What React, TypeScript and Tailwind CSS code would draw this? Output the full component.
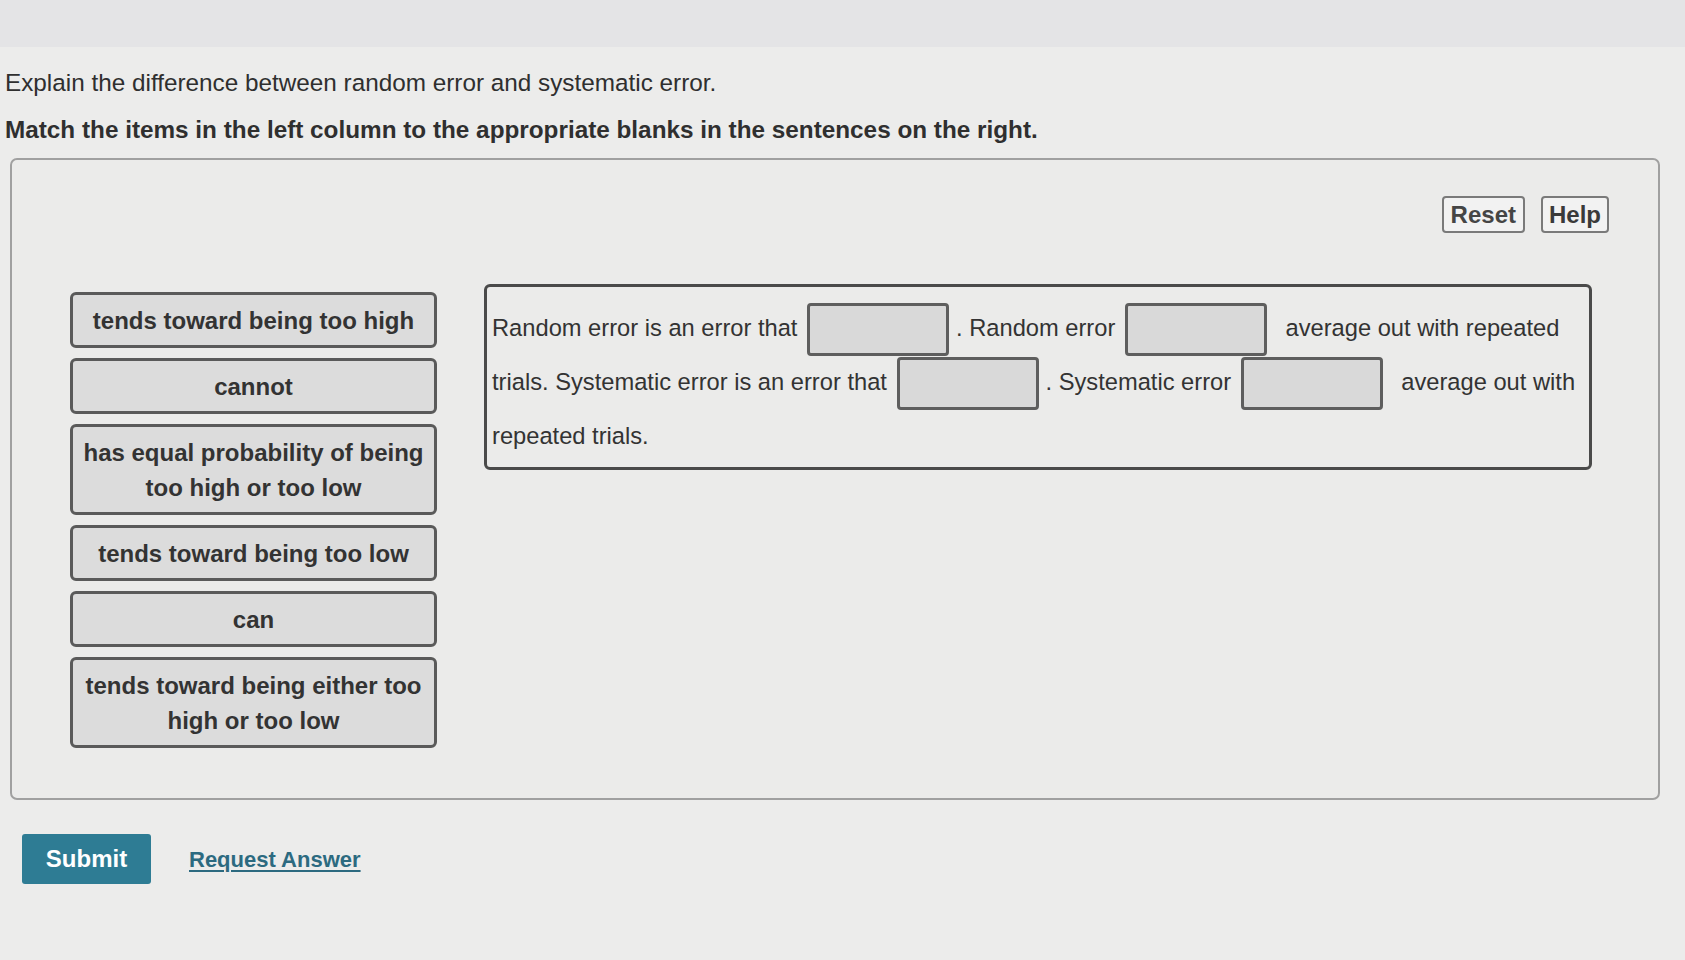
import React from 'react';

const choices: { label: React.ReactNode; tall?: boolean }[] = [
    { label: 'tends toward being too high' },
    { label: 'cannot' },
    { label: <>has equal probability of being<br />too high or too low</>, tall: true },
    { label: 'tends toward being too low' },
    { label: 'can' },
    { label: <>tends toward being either too<br />high or too low</>, tall: true },
];

const Blank: React.FC<{ wide?: boolean }> = ({ wide }) => (
    <span
        className={`inline-block align-middle w-[142px] h-[53px] bg-[#d9d9d9] border-[3px] border-[#5e5e5e] rounded-[4px] ml-[3px] ${wide ? 'mr-[12px]' : 'mr-[7px]'}`}
    />
);

const App: React.FC = () => {
    return (
        <div className="min-h-[960px] bg-[#ececeb] text-[#2f2f2f] font-['Liberation_Sans',Arial,sans-serif]">
            <div className="h-[47px] bg-[#e4e4e6]" />

            <div className="px-[5px]">
                <p className="mt-[22px] text-[24.3px] leading-[28px]">
                    Explain the difference between random error and systematic error.
                </p>
                <p className="mt-[19px] text-[24.3px] leading-[28px] font-bold">
                    Match the items in the left column to the appropriate blanks in the sentences on the right.
                </p>
            </div>

            <div className="ml-[10px] mt-[14px] w-[1650px] h-[642px] border-2 border-[#a0a0a0] rounded-[7px] bg-[#ebebea]">
                <div className="flex justify-end gap-[16px] pt-[36px] pr-[49px]">
                    <button className="h-[37px] px-[7px] border-2 border-[#7a7a7a] rounded-[4px] bg-[#f2f2f2] text-[24px] leading-[29px] font-bold text-[#454545]">
                        Reset
                    </button>
                    <button className="h-[37px] px-[6px] border-2 border-[#7a7a7a] rounded-[4px] bg-[#f2f2f2] text-[24px] leading-[29px] font-bold text-[#3a3a3a]">
                        Help
                    </button>
                </div>

                <div className="flex items-start mt-[51px] pl-[58px]">
                    <div className="flex flex-col gap-[10px] w-[367px] mt-[8px]">
                        {choices.map((c, i) => (
                            <div
                                key={i}
                                className={`flex items-center justify-center text-center border-[3px] border-[#5a5a5a] rounded-[6px] bg-[#dcdcdc] text-[24px] leading-[35px] font-bold text-[#333] ${c.tall ? 'h-[91px]' : 'h-[56px]'}`}
                            >
                                <span>{c.label}</span>
                            </div>
                        ))}
                    </div>

                    <div className="ml-[47px] w-[1108px] border-[3px] border-[#4a4a4a] rounded-[6px] pt-[14px] pb-[4px] pl-[5px] text-[23.7px] text-[#333]">
                        <div className="h-[54px] leading-[54px] whitespace-nowrap">
                            Random error is an error that <Blank />. Random error <Blank wide /> average out with repeated
                        </div>
                        <div className="h-[54px] leading-[54px] whitespace-nowrap">
                            trials. Systematic error is an error that <Blank />. Systematic error <Blank wide /> average out with
                        </div>
                        <div className="h-[54px] leading-[54px] whitespace-nowrap">repeated trials.</div>
                    </div>
                </div>
            </div>

            <div className="flex items-center gap-[38px] mt-[34px] ml-[22px]">
                <button className="w-[129px] h-[50px] rounded-[3px] bg-[#2e7c94] text-white text-[24px] font-bold">
                    Submit
                </button>
                <a className="text-[22px] font-bold text-[#2c6a80] underline underline-offset-[3px] decoration-2">
                    Request Answer
                </a>
            </div>
        </div>
    );
};

export default App;
